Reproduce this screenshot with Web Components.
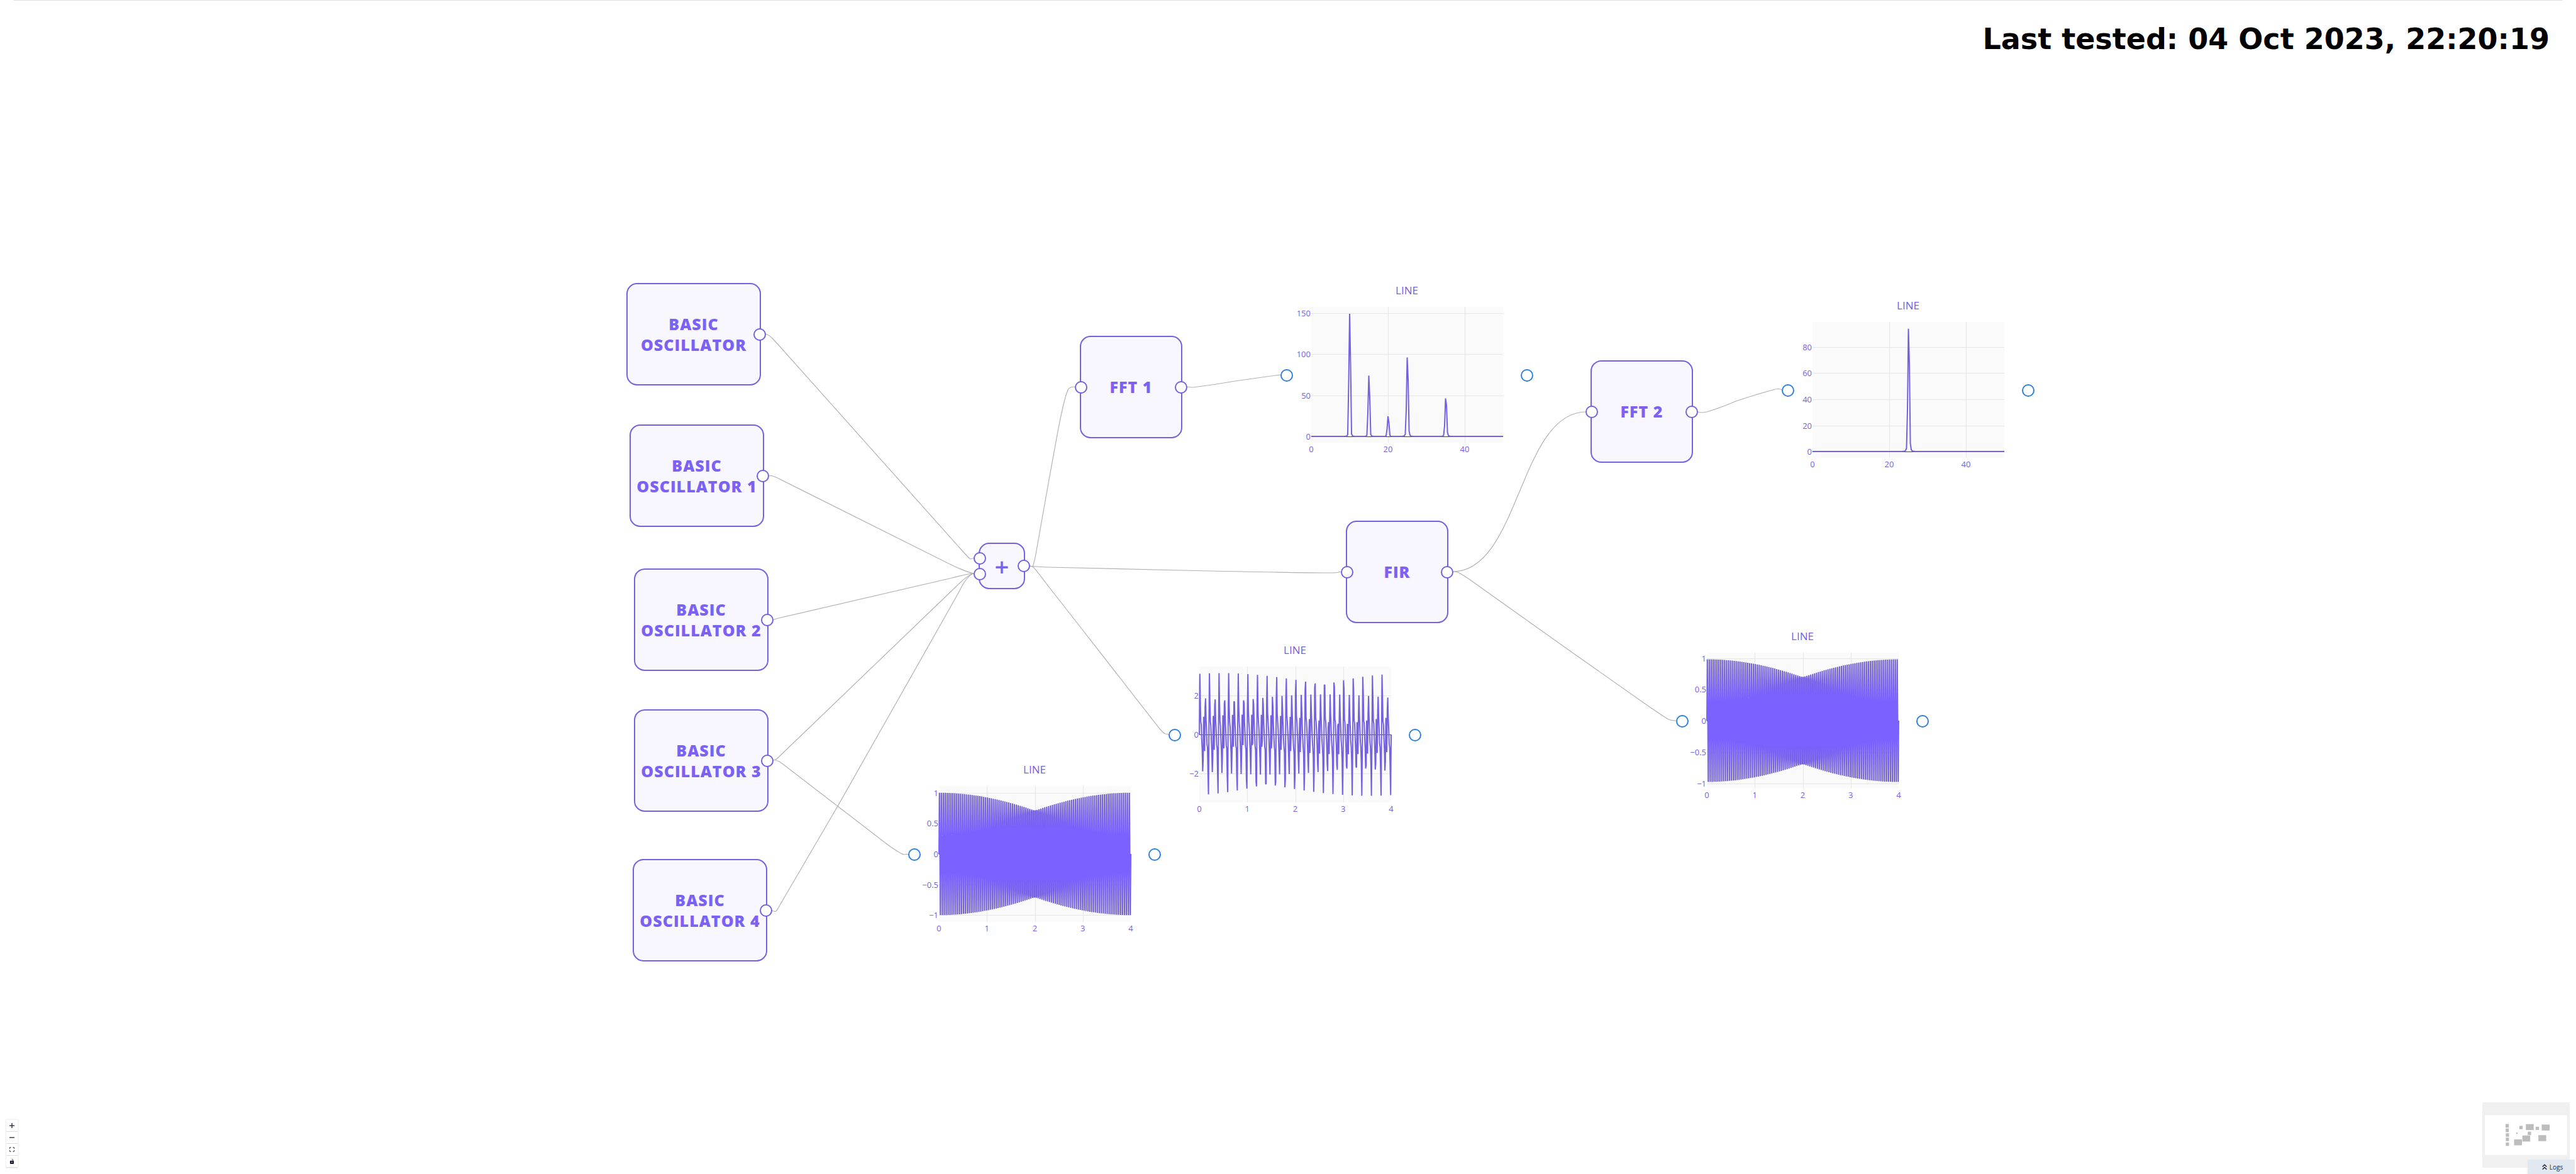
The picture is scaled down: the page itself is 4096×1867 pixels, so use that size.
<!DOCTYPE html>
<html lang="en">
<head>
<meta charset="utf-8">
<title>Flow</title>
<style>
  html, body { margin: 0; height: 100%; background: #fff; }
  body { font-family: "Open Sans", sans-serif; --accent: #7b61ff; --accent-line: #7560e0; --accent-text: #7b62f4; --accent-soft: #f8f6ff; --port: #2f80e0; --edge: #b1b1b4; overflow: hidden; }
</style>
</head>
<body>
<flow-app>
  <status-banner slot="status">Last tested: 04 Oct 2023, 22:20:19</status-banner>

  <flow-edges slot="canvas"></flow-edges>

  <flow-node slot="canvas" x="996" y="450" kind="source">BASIC OSCILLATOR</flow-node>
  <flow-node slot="canvas" x="1001" y="675" kind="source">BASIC OSCILLATOR 1</flow-node>
  <flow-node slot="canvas" x="1008" y="904" kind="source">BASIC OSCILLATOR 2</flow-node>
  <flow-node slot="canvas" x="1008" y="1128" kind="source">BASIC OSCILLATOR 3</flow-node>
  <flow-node slot="canvas" x="1006" y="1366" kind="source">BASIC OSCILLATOR 4</flow-node>
  <flow-node slot="canvas" x="1556" y="863" kind="operator">+</flow-node>
  <flow-node slot="canvas" x="1717" y="534" kind="transform">FFT 1</flow-node>
  <flow-node slot="canvas" x="2140" y="828" kind="transform">FIR</flow-node>
  <flow-node slot="canvas" x="2529" y="573" kind="transform">FFT 2</flow-node>

  <line-plot slot="canvas" x="2044" y="452" data="spectrum-sum">LINE</line-plot>
  <line-plot slot="canvas" x="2841" y="476" data="spectrum-fir">LINE</line-plot>
  <line-plot slot="canvas" x="1866" y="1024" data="wave-sum">LINE</line-plot>
  <line-plot slot="canvas" x="1452" y="1214" data="wave-osc">LINE</line-plot>
  <line-plot slot="canvas" x="2673" y="1002" data="wave-fir">LINE</line-plot>

  <flow-controls slot="controls"></flow-controls>
  <mini-map slot="map"></mini-map>
  <logs-tab slot="logs">Logs</logs-tab>
</flow-app>

<script>
function define(name, markup, setup) {
  const template = document.createElement('template');
  template.innerHTML = markup;
  customElements.define(name, class extends HTMLElement {
    constructor() {
      super();
      this.attachShadow({ mode: 'open' }).append(template.content.cloneNode(true));
    }
    connectedCallback() {
      if (this.hasAttribute('x')) {
        this.style.left = this.getAttribute('x') + 'px';
        this.style.top = this.getAttribute('y') + 'px';
      }
      if (setup) setup(this, this.shadowRoot);
    }
  });
}

define('flow-app', `
<style>
  :host { display: flex; flex-direction: column; height: 100vh; position: relative; }
  header { margin: 0 22px; padding: 26px 20px 0; border-top: 1px solid #e0e0e0; display: flex; justify-content: flex-end; }
  main { position: absolute; inset: 0; }
  aside { margin-top: auto; padding: 0 10px 10px; display: flex; align-items: flex-end; justify-content: space-between; z-index: 1; }
  footer { position: absolute; right: 2px; bottom: 0; z-index: 2; }
</style>
<header><slot name="status"></slot></header>
<main><slot name="canvas"></slot></main>
<aside><slot name="controls"></slot><slot name="map"></slot></aside>
<footer><slot name="logs"></slot></footer>`);

define('status-banner', `
<style>
  :host { display: block; font: bold 46px/70px "DejaVu Sans", sans-serif; color: #000; white-space: nowrap; }
</style>
<slot></slot>`);

define('flow-node', `
<style>
  :host { position: absolute; box-sizing: border-box; display: flex; align-items: center; justify-content: center;
    width: 163px; height: 163px; border: 2px solid var(--accent-line); border-radius: 17px; background: var(--accent-soft);
    color: var(--accent-text); font-size: 25px; line-height: 33px; font-weight: 800; letter-spacing: 1px; text-align: center; }
  :host([kind=source]) { width: 214px; }
  :host([kind=operator]) { width: 74px; height: 74px; font-size: 40px; font-weight: 600; letter-spacing: 0; }
  .ports { position: absolute; top: 0; bottom: 0; display: flex; flex-direction: column; justify-content: center; gap: 5px; }
  .in { left: -10px; }
  .out { right: -10px; }
  i { box-sizing: border-box; width: 20px; height: 20px; border: 2px solid var(--accent-line); border-radius: 50%; background: #fff; }
  .second { display: none; }
  :host([kind=source]) .in { display: none; }
  :host([kind=operator]) .second { display: block; }
</style>
<span class="ports in"><i></i><i class="second"></i></span>
<slot></slot>
<span class="ports out"><i></i></span>`);

/* Signals: 400 samples over 4 seconds, Hann-windowed spectra up to 50 Hz. */
const N = 400;
const times = Array.from({ length: N }, (_, i) => 4 * i / (N - 1));
const tones = list => times.map(t => list.reduce((s, [f, a]) => s + a * Math.sin(2 * Math.PI * f * t), 0));
const sum = tones([[10, 1.5], [15, .75], [20, .25], [25, 1], [35, .5]]);
const filtered = tones([[25, .98]]);
const wave = ys => ys.map((y, i) => [times[i], y]);
const spectrum = ys => Array.from({ length: N / 2 + 1 }, (_, k) => {
  let re = 0, im = 0;
  ys.forEach((y, n) => {
    const w = .5 - .5 * Math.cos(2 * Math.PI * n / N), p = 2 * Math.PI * k * n / N;
    re += y * w * Math.cos(p); im -= y * w * Math.sin(p);
  });
  return [k / 4, Math.hypot(re, im)];
});
const seconds = [0, 1, 2, 3, 4], hertz = [0, 20, 40];
const charts = {
  'spectrum-sum': { points: spectrum(sum), xmax: 50, xs: hertz, ys: [0, 50, 100, 150], zero: 242, unit: 1.308 },
  'spectrum-fir': { points: spectrum(filtered), xmax: 50, xs: hertz, ys: [0, 20, 40, 60, 80], zero: 242, unit: 2.075 },
  'wave-sum': { points: wave(sum), xmax: 4, xs: seconds, ys: [-2, 0, 2], zero: 144, unit: 30.8 },
  'wave-osc': { points: wave(tones([[25, 1]])), xmax: 4, xs: seconds, ys: [-1, -.5, 0, .5, 1], zero: 144, unit: 97.3, dense: true },
  'wave-fir': { points: wave(filtered), xmax: 4, xs: seconds, ys: [-1, -.5, 0, .5, 1], zero: 144, unit: 99.5, dense: true }
};

define('line-plot', `
<style>
  :host { position: absolute; width: 386px; height: 290px; display: flex; flex-direction: column; align-items: center;
    color: var(--accent-line); font-size: 17px; line-height: 20px; }
  svg { position: absolute; inset: 0; width: 100%; height: 100%; overflow: visible; }
  text { font-size: 13px; fill: var(--accent-line); }
  .port { position: absolute; top: 135px; box-sizing: border-box; width: 20px; height: 20px; border: 2px solid var(--port); border-radius: 50%; background: #fff; }
  .in { left: -8px; }
  .out { right: -8px; }
</style>
<slot></slot>
<svg></svg>
<i class="port in"></i><i class="port out"></i>`, (host, root) => {
  const c = charts[host.getAttribute('data')];
  const X = v => 41 + v / c.xmax * 305;
  const Y = v => c.zero - v * c.unit;
  const label = v => String(v).replace('-', '\u2212');
  let s = `<defs><linearGradient id="dense" gradientUnits="userSpaceOnUse" x1="0" x2="0" y1="46" y2="242">
    <stop offset="0" stop-color="#6b58c4"/><stop offset=".3" stop-color="#7b61ff"/>
    <stop offset=".7" stop-color="#7b61ff"/><stop offset="1" stop-color="#6b58c4"/></linearGradient></defs>
    <rect x="41" y="36" width="305" height="216" fill="#fafafa"/>`;
  c.xs.forEach(v => {
    if (v > 0 && v < c.xmax) s += `<path d="M${Math.round(X(v)) + .5} 36V252" stroke="#e6e6e6"/>`;
    s += `<text x="${X(v)}" y="267" text-anchor="middle">${label(v)}</text>`;
  });
  c.ys.forEach(v => {
    s += `<path d="M41 ${Math.round(Y(v)) + .5}H346" stroke="${v ? '#e6e6e6' : '#444'}"/>`;
    s += `<text x="40" y="${Math.round(Y(v)) + 5}" text-anchor="end">${label(v)}</text>`;
  });
  const line = c.points.map(([x, y]) => X(x).toFixed(2) + ' ' + Y(y).toFixed(2)).join('L');
  s += `<path d="M${line}" fill="none" stroke="${c.dense ? 'url(#dense)' : 'var(--accent-line)'}" stroke-width="2" stroke-miterlimit="2"/>`;
  root.querySelector('svg').innerHTML = s;
});

define('flow-edges', `
<style>
  :host { position: absolute; inset: 0; }
  svg { display: block; width: 100%; height: 100%; }
  path { fill: none; stroke: var(--edge); stroke-width: 1.2; }
</style>
<svg>
  <path d="M1217 531Q1223 532 1231 541L1532 878Q1541 888 1543 889Q1545 889 1549 887"/>
  <path d="M1222 756Q1228 756 1234 759L1514 899Q1540 911 1549 912"/>
  <path d="M1228 986L1238 983L1514 919Q1540 912 1549 912"/>
  <path d="M1228 1209Q1232 1209 1235 1207L1520 933Q1540 913 1549 912"/>
  <path d="M1228 1209Q1233 1207 1242 1213L1415 1346Q1433 1358 1437 1359L1446 1358"/>
  <path d="M1227 1448Q1232 1450 1234 1449Q1236 1447 1242 1436L1332 1282L1494 996L1525 941Q1538 914 1549 912"/>
  <path d="M1637 900L1642 901Q1645 894 1649 870L1666 774L1682 686Q1692 634 1698 620Q1700 615 1710 615"/>
  <path d="M1637 900Q1641 901 1666 902L1879 907Q2060 911 2120 911Q2127 911 2132 909"/>
  <path d="M1637 900L1642 901Q1645 903 1666 931L1720 1000L1844 1159Q1851 1167 1853 1167L1859 1168"/>
  <path d="M1887 615Q1892 616 1897 616Q1930 612 1964 606L2028 597L2037 596"/>
  <path d="M2310 909C2416 909 2416 655 2522 655"/>
  <path d="M2310 909Q2317 909 2322 912L2336 921L2499 1037L2624 1125L2651 1143Q2656 1146 2665 1146"/>
  <path d="M2699 655Q2706 657 2714 655Q2740 647 2760 638L2791 628L2819 620Q2828 617 2834 620"/>
</svg>`);

define('flow-controls', `
<style>
  :host { display: flex; flex-direction: column; width: 18px; box-shadow: 0 0 2px 1px rgba(0,0,0,.08); }
  button { all: unset; box-sizing: border-box; display: flex; align-items: center; justify-content: center; width: 18px; height: 19px; background: #fff; border-bottom: 1px solid #ddd; }
  svg { width: 8px; height: 8px; fill: #1a192b; }
</style>
<button aria-label="zoom in"><svg viewBox="0 0 32 32"><path d="M32 18.500H18.500V32h-5V18.500H0v-5h13.500V0h5v13.500H32z"/></svg></button>
<button aria-label="zoom out"><svg viewBox="0 0 32 32"><path d="M0 13.500h32v5H0z"/></svg></button>
<button aria-label="fit view"><svg viewBox="0 0 32 30"><path d="M3.692 4.630c0-.53.4-.938.939-.938h5.215V0H4.708C2.130 0 0 2.054 0 4.630v5.216h3.692V4.631zM27.354 0h-5.200v3.692h5.170c.53 0 .984.400.984.939v5.215H32V4.631A4.624 4.624 0 0027.354 0zm.954 24.830c0 .532-.4.940-.939.940h-5.215v3.768h5.215c2.577 0 4.631-2.130 4.631-4.707v-5.139h-3.692v5.139zm-23.677.940c-.531 0-.939-.4-.939-.940v-5.138H0v5.139c0 2.577 2.130 4.707 4.708 4.707h5.138V25.770H4.631z"/></svg></button>
<button aria-label="toggle interactivity"><svg viewBox="0 0 25 32"><path d="M21.333 10.667H19.810V7.619C19.810 3.429 16.380 0 12.190 0c-4.114 1.828-1.370 2.133.305 2.438 1.676.305 4.420 2.590 4.420 5.181v3.048H3.047A3.056 3.056 0 000 13.714v15.238A3.056 3.056 0 003.048 32h18.285a3.056 3.056 0 003.048-3.048V13.714a3.056 3.056 0 00-3.048-3.047zM12.190 24.533a3.056 3.056 0 01-3.047-3.047 3.056 3.056 0 013.047-3.048 3.056 3.056 0 013.048 3.048 3.056 3.056 0 01-3.048 3.047z"/></svg></button>`);

define('mini-map', `
<style>
  :host { display: block; width: 139px; height: 104px; background: #f0f0f0; }
  svg { display: block; width: 100%; height: 100%; }
  .view { fill: #fff; }
  .nodes { fill: #bdbdbd; }
</style>
<svg viewBox="135 75 600 450">
  <rect class="view" x="152" y="163" width="565" height="274"/>
  <g class="nodes">
    <rect x="294" y="224" width="23" height="25"/><rect x="295" y="255" width="22" height="25"/>
    <rect x="296" y="288" width="22" height="24"/><rect x="296" y="318" width="22" height="24"/>
    <rect x="296" y="351" width="22" height="24"/><rect x="367" y="283" width="11" height="10"/>
    <rect x="389" y="237" width="23" height="23"/><rect x="447" y="277" width="23" height="23"/>
    <rect x="501" y="243" width="23" height="22"/><rect x="434" y="225" width="54" height="41"/>
    <rect x="543" y="228" width="54" height="41"/><rect x="410" y="303" width="54" height="42"/>
    <rect x="353" y="330" width="54" height="41"/><rect x="520" y="301" width="54" height="41"/>
  </g>
</svg>`);

define('logs-tab', `
<style>
  :host { display: block; }
  button { all: unset; display: flex; align-items: center; justify-content: center; gap: 4px; padding-left: 4px; box-sizing: border-box; width: 75px; height: 23px; background: #e1e8f0; color: #1e293b; font-size: 10px; line-height: 14px; }
  svg { width: 8px; height: 10px; fill: none; stroke: currentColor; stroke-width: 1.500; }
</style>
<button><svg viewBox="0 0 8 10"><path d="M.7 4.500L4 1.200l3.300 3.300M.7 8.800L4 5.500l3.300 3.300"/></svg><slot></slot></button>`);
</script>
</body>
</html>
